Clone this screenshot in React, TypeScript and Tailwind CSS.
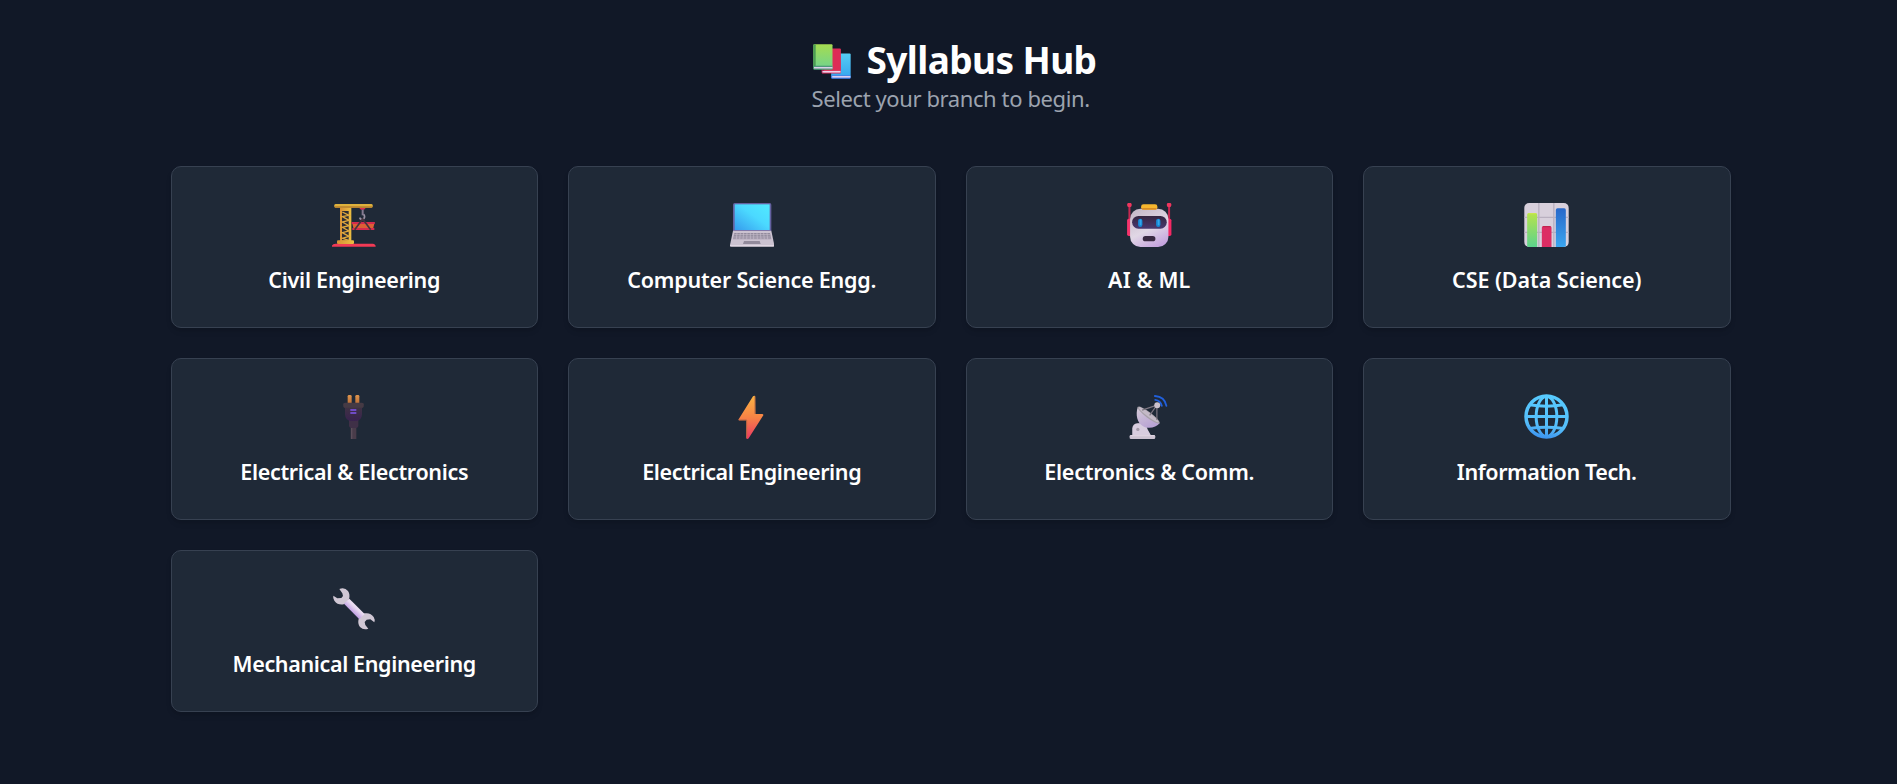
import type { ReactNode } from 'react';

function BooksIcon() {
  return (
    <svg viewBox="38 44 113 104" className="mt-[2px] h-[35px] w-[38px] shrink-0">
      <defs>
        <linearGradient id="bk-green" x1="0" y1="0" x2="0" y2="1">
          <stop offset="0" stopColor="#a5dc50" />
          <stop offset="1" stopColor="#6fd390" />
        </linearGradient>
        <linearGradient id="bk-blue" x1="0" y1="0" x2="0" y2="1">
          <stop offset="0" stopColor="#56cdf4" />
          <stop offset="1" stopColor="#35a4ee" />
        </linearGradient>
      </defs>
      <rect x="92" y="72" width="58" height="74" rx="3" fill="url(#bk-blue)" />
      <rect x="92" y="137" width="58" height="10" rx="3" fill="#3f7ee8" />
      <rect x="95" y="139" width="54" height="5" fill="#d9cdf0" />
      <rect x="64" y="57" width="57" height="75" rx="3" fill="#dd2c56" />
      <rect x="64" y="57" width="7" height="75" rx="3" fill="#a91c4b" />
      <rect x="66" y="124" width="54" height="5" fill="#e9d3ec" />
      <rect x="39" y="45" width="57" height="75" rx="3" fill="url(#bk-green)" />
      <rect x="39" y="45" width="7" height="72" rx="3" fill="#4b9d53" />
      <rect x="39" y="109" width="57" height="11" rx="3" fill="#3d8e6d" />
      <rect x="41" y="112" width="55" height="5" fill="#dbd0e8" />
    </svg>
  );
}

function CraneIcon() {
  return (
    <svg viewBox="23 24 132 132" className="size-11">
      <defs>
        <linearGradient id="cr-y" x1="0" y1="0" x2="1" y2="0">
          <stop offset="0" stopColor="#d99035" />
          <stop offset="1" stopColor="#ebbf42" />
        </linearGradient>
      </defs>
      <path d="M22 155 Q23 146 34 146 H145 Q154 147 154 155 Z" fill="#f23a55" />
      <rect x="47" y="36" width="34" height="106" fill="url(#cr-y)" />
      <rect x="53" y="48" width="20" height="88" fill="#2b2b34" />
      <path d="M54 51 L74 61 L54 65 L74 76 L54 81 L74 92 L54 97 L74 108 L54 113 L74 124 L54 130 L74 136" fill="none" stroke="#dfa83d" strokeWidth="4" />
      <rect x="38" y="136" width="51" height="11" rx="3" fill="url(#cr-y)" />
      <rect x="30" y="27" width="115" height="11" rx="4" fill="#deb13c" />
      <rect x="31" y="34" width="113" height="4" rx="2" fill="#b9802e" />
      <path d="M105 39 H124 L119 44 H110 Z" fill="#e12d50" />
      <path d="M83 82 H151 L146 103 H88 Z" fill="#dc6035" />
      <path d="M82 81 H151 V87 H82 Z M84 99 H150 V105 H84 Z" fill="#d42b4e" />
      <path d="M115 44 V61" stroke="#847a91" strokeWidth="6" />
      <path d="M118 58 Q124 67 117 72 Q109 76 106 68" fill="none" stroke="#9a91a4" strokeWidth="5" />
      <path d="M91 104 L115 72 L139 104" fill="none" stroke="#44333d" strokeWidth="5" />
    </svg>
  );
}

function LaptopIcon() {
  return (
    <svg viewBox="23 24 132 132" className="size-11">
      <defs>
        <linearGradient id="lp-s" x1="1" y1="0" x2="0" y2="1">
          <stop offset="0" stopColor="#51eaff" />
          <stop offset=".45" stopColor="#4bd9ff" />
          <stop offset="1" stopColor="#369ced" />
        </linearGradient>
      </defs>
      <rect x="32" y="24" width="115" height="88" rx="5" fill="#6461a0" />
      <rect x="37" y="28" width="105" height="77" fill="url(#lp-s)" />
      <path d="M32 107 H147 L156 150 Q156 155 151 155 H27 Q22 155 23 150 Z" fill="#cbc2d0" />
      <path d="M36 114 H143 L147 133 H32 Z" fill="#928b9d" />
      <path d="M36 119 H144 M34 126 H145 M33 132 H147" stroke="#c5bccb" strokeWidth="2" />
      <path d="M44 114 L42 133 M54 114 L52 133 M64 114 L62 133 M74 114 L73 133 M84 114 V133 M94 114 V133 M104 114 L105 133 M114 114 L116 133 M124 114 L126 133 M134 114 L136 133" stroke="#c5bccb" strokeWidth="2" />
      <path d="M65 138 H112 L115 147 H62 Z" fill="#928a9b" />
      <path d="M23 152 H155" stroke="#e0d6e2" strokeWidth="4" />
    </svg>
  );
}

function RobotIcon() {
  return (
    <svg viewBox="21 24 133 132" className="h-11 w-[44.500px]">
      <defs>
        <linearGradient id="rb-h" x1=".2" y1="0" x2=".7" y2="1">
          <stop offset="0" stopColor="#c6bac9" />
          <stop offset=".55" stopColor="#e1d7e5" />
          <stop offset="1" stopColor="#c5a4df" />
        </linearGradient>
        <linearGradient id="rb-f" x1="0" y1="0" x2="0" y2="1">
          <stop offset="0" stopColor="#352640" />
          <stop offset="1" stopColor="#493971" />
        </linearGradient>
      </defs>
      <path d="M28 32 V78 M147 32 V78" stroke="#c62851" strokeWidth="6" />
      <circle cx="28" cy="30" r="7" fill="#ef365e" />
      <circle cx="147" cy="30" r="7" fill="#ef365e" />
      <rect x="21" y="71" width="15" height="52" rx="5" fill="#f7346c" />
      <rect x="139" y="71" width="15" height="52" rx="5" fill="#f52864" />
      <rect x="30" y="41" width="115" height="115" rx="31" fill="url(#rb-h)" />
      <rect x="63" y="28" width="49" height="16" rx="7" fill="#f6b62e" />
      <path d="M66 39 H109 V44 H66 Z" fill="#d88b25" />
      <rect x="36" y="63" width="104" height="38" rx="19" fill="url(#rb-f)" />
      <rect x="54" y="71" width="13" height="25" rx="6.5" fill="#1687d4" />
      <rect x="108" y="71" width="13" height="25" rx="6.5" fill="#1687d4" />
      <rect x="59" y="73" width="5" height="18" rx="2.5" fill="#34a7ec" />
      <rect x="113" y="73" width="5" height="18" rx="2.5" fill="#34a7ec" />
      <rect x="68" y="123" width="38" height="16" rx="8" fill="#392941" />
    </svg>
  );
}

function ChartIcon() {
  return (
    <svg viewBox="25 24 134 132" className="h-11 w-[45px]">
      <defs>
        <clipPath id="ch-c"><rect x="25" y="24" width="134" height="132" rx="15" /></clipPath>
        <linearGradient id="ch-g" x1="0" y1="0" x2="0" y2="1">
          <stop offset="0" stopColor="#b7e34b" />
          <stop offset="1" stopColor="#5cd38d" />
        </linearGradient>
        <linearGradient id="ch-b" x1="0" y1="0" x2="0" y2="1">
          <stop offset="0" stopColor="#2868ca" />
          <stop offset="1" stopColor="#3aa5ef" />
        </linearGradient>
      </defs>
      <g clipPath="url(#ch-c)">
        <rect x="25" y="24" width="134" height="132" fill="#d8d0dc" />
        <path d="M69 24 V156 M114 24 V156 M25 67 H159 M25 112 H159" stroke="#b9b0c0" strokeWidth="4" />
        <path d="M34 156 V59 Q34 54 39 54 H59 Q64 54 64 59 V156 Z" fill="url(#ch-g)" />
        <path d="M78 156 V98 Q78 93 83 93 H102 Q107 93 107 98 V156 Z" fill="#dc2d64" />
        <path d="M120 156 V45 Q120 40 125 40 H145 Q150 40 150 45 V156 Z" fill="url(#ch-b)" />
        <path d="M37 56 H61" stroke="#cce84c" strokeWidth="3" />
        <path d="M81 95 H104" stroke="#bb244b" strokeWidth="3" />
      </g>
    </svg>
  );
}

function PlugIcon() {
  return (
    <svg viewBox="23 24 132 132" className="size-11">
      <defs>
        <linearGradient id="pg-p" x1="0" y1="0" x2="0" y2="1">
          <stop offset="0" stopColor="#e0954d" />
          <stop offset="1" stopColor="#b66a35" />
        </linearGradient>
        <linearGradient id="pg-b" x1="0" y1="0" x2="0" y2="1">
          <stop offset="0" stopColor="#40373f" />
          <stop offset="1" stopColor="#38224e" />
        </linearGradient>
      </defs>
      <rect x="70" y="24" width="12" height="29" rx="4" fill="url(#pg-p)" />
      <rect x="93" y="24" width="12" height="29" rx="4" fill="url(#pg-p)" />
      <rect x="79" y="118" width="17" height="38" fill="#493c4a" />
      <path d="M82 122 V156" stroke="#5c4e5b" strokeWidth="4" />
      <path d="M74 98 H102 V115 Q102 123 95 123 H82 Q74 123 74 115 Z" fill="#3f3047" />
      <path d="M58 48 H117 V61 L113 63 V82 Q112 102 94 102 H81 Q63 102 62 82 V63 L58 61 Z" fill="url(#pg-b)" />
      <rect x="57" y="47" width="61" height="15" rx="5" fill="#453a44" />
      <rect x="78" y="66" width="18" height="6" fill="#704bc5" />
      <rect x="78" y="75" width="18" height="6" fill="#704bc5" />
    </svg>
  );
}

function BoltIcon() {
  return (
    <svg viewBox="23 24 132 132" className="size-11">
      <defs>
        <linearGradient id="bt-g" x1="0" y1="0" x2="0" y2="1">
          <stop offset="0" stopColor="#fbb444" />
          <stop offset=".5" stopColor="#f78345" />
          <stop offset="1" stopColor="#ec3864" />
        </linearGradient>
      </defs>
      <path d="M98 27 Q96 25 92 28 L48 98 Q48 100 51 100 H72 V154 Q75 158 79 154 L123 85 Q124 81 119 81 H99 Z" fill="url(#bt-g)" />
      <path d="M98 28 V81 M50 99 H73 V154" fill="none" stroke="#b96840" strokeWidth="3" />
    </svg>
  );
}

function SatelliteIcon() {
  return (
    <svg viewBox="23 22 132 134" className="size-11">
      <defs>
        <linearGradient id="st-g" x1="0" y1="0" x2=".5" y2="1">
          <stop offset="0" stopColor="#d5ccd7" />
          <stop offset="1" stopColor="#b9a3d4" />
        </linearGradient>
      </defs>
      <path d="M108 37 Q124 39 128 55 M107 25 Q137 27 142 55" fill="none" stroke="#2160dc" strokeWidth="5.500" strokeLinecap="round" />
      <path d="M38 147 V123 Q40 109 53 108 L72 107 Q83 115 85 127 L96 147 Z" fill="#d8cddf" />
      <path d="M55 58 C47 82 53 108 71 117 C89 127 111 120 122 107 Z" fill="url(#st-g)" />
      <ellipse cx="88" cy="83" rx="41" ry="9" transform="rotate(37 88 83)" fill="#a7a0a9" />
      <ellipse cx="88" cy="82" rx="37" ry="6" transform="rotate(37 88 82)" fill="#c4bac7" />
      <path d="M68 68 L113 53 L91 84 M113 53 L113 98" fill="none" stroke="#7f7883" strokeWidth="3.500" />
      <circle cx="114" cy="53" r="9" fill="#cbc2cd" />
      <circle cx="55" cy="127" r="5" fill="#a49baa" />
      <rect x="30" y="144" width="78" height="12" rx="4" fill="#cdc3d2" />
      <path d="M32 146 H106" stroke="#eee4ee" strokeWidth="2" />
    </svg>
  );
}

function GlobeIcon() {
  return (
    <svg viewBox="22 23 135 134" className="-mt-px mr-px size-[45px]">
      <defs>
        <linearGradient id="gl-g" gradientUnits="userSpaceOnUse" x1="100" y1="24" x2="75" y2="157">
          <stop offset="0" stopColor="#57cbff" />
          <stop offset=".7" stopColor="#55bdf9" />
          <stop offset="1" stopColor="#3a90ef" />
        </linearGradient>
      </defs>
      <g fill="none" stroke="url(#gl-g)">
        <circle cx="89.500" cy="90" r="61.500" strokeWidth="10.500" />
        <ellipse cx="89.500" cy="90" rx="31" ry="60" strokeWidth="9" />
        <path d="M89.500 28 L89.600 152" strokeWidth="9" />
        <path d="M28 90 L151 90.100" strokeWidth="9" />
        <path d="M38 55 Q89 63 141 55 M38 126 Q89 118 141 126" strokeWidth="9" />
      </g>
    </svg>
  );
}

function WrenchIcon() {
  return (
    <svg viewBox="23 20 132 132" className="size-11">
      <defs>
        <linearGradient id="wr-g" gradientUnits="userSpaceOnUse" x1="82" y1="92" x2="93" y2="80">
          <stop offset="0" stopColor="#c4a5e4" />
          <stop offset="1" stopColor="#eadcf1" />
        </linearGradient>
      </defs>
      <path d="M45 26 Q61 20 71 32 Q78 42 74 57 Q69 69 58 72 Q40 75 30 61 Q25 54 27 46 L39 54 L51 53 L56 47 L54 39 Z" fill="#d0c7d4" />
      <path d="M132 145 Q118 151 107 140 Q99 130 103 116 Q108 102 121 99 Q139 96 148 110 Q153 118 150 126 L138 117 L127 118 L121 125 L123 134 Z" fill="#d0c7d4" />
      <path d="M59 70 L75 55 L121 101 L105 117 Z" fill="url(#wr-g)" />
    </svg>
  );
}

const branches: { name: string; icon: ReactNode; track: string }[] = [
  { name: 'Civil Engineering', icon: <CraneIcon />, track: 'tracking-[-0.23px]' },
  { name: 'Computer Science Engg.', icon: <LaptopIcon />, track: 'tracking-[-0.2px]' },
  { name: 'AI & ML', icon: <RobotIcon />, track: 'tracking-[0.15px]' },
  { name: 'CSE (Data Science)', icon: <ChartIcon />, track: 'tracking-[-0.07px]' },
  { name: 'Electrical & Electronics', icon: <PlugIcon />, track: 'tracking-[-0.32px]' },
  { name: 'Electrical Engineering', icon: <BoltIcon />, track: 'tracking-[-0.38px]' },
  { name: 'Electronics & Comm.', icon: <SatelliteIcon />, track: 'tracking-[-0.26px]' },
  { name: 'Information Tech.', icon: <GlobeIcon />, track: 'tracking-[-0.4px]' },
  { name: 'Mechanical Engineering', icon: <WrenchIcon />, track: 'tracking-[-0.36px]' },
];

export default function App() {
  return (
    <div className="min-h-screen bg-[#111827] pr-[166.500px] pl-[170.500px] font-['Noto_Sans','Open_Sans',sans-serif] text-white">
      <header className="flex h-[166px] justify-center pt-[36px]">
        <div className="w-[278px] whitespace-nowrap">
          <h1 className="flex h-[48px] items-center gap-[16px] pl-px text-[37px] leading-[48px] font-bold tracking-[-0.6px]">
            <BooksIcon />
            Syllabus Hub
          </h1>
          <p className="text-[22px] leading-[28px] tracking-[-0.4px] text-[#9ca3af]">Select your branch to begin.</p>
        </div>
      </header>
      <main className="grid grid-cols-4 gap-[30px]">
        {branches.map((b) => (
          <button
            key={b.name}
            type="button"
            className="flex h-[162px] flex-col items-center rounded-[10px] border border-[#374151] bg-[#1f2937] pt-[36px] shadow-md"
          >
            <span className="flex h-11 items-center">{b.icon}</span>
            <span className={`mt-[18px] text-[21.500px] leading-[30px] font-semibold whitespace-nowrap ${b.track}`}>{b.name}</span>
          </button>
        ))}
      </main>
    </div>
  );
}
